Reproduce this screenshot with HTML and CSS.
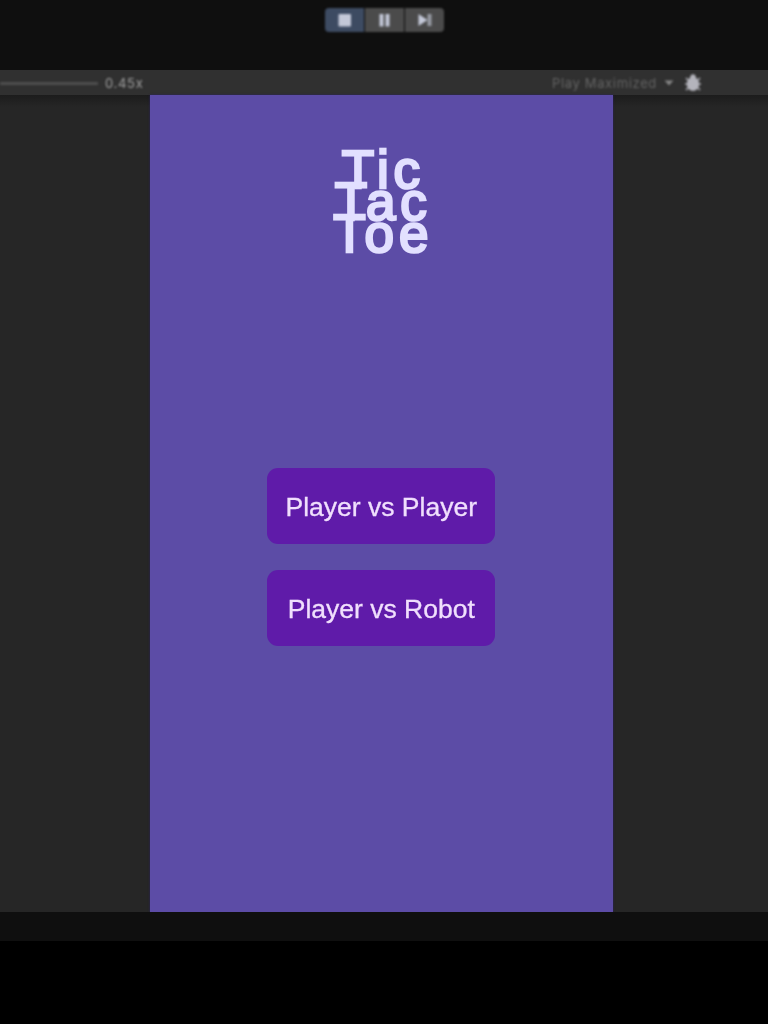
FILE: index.html
```html
<!DOCTYPE html>
<html lang="en">
<head>
<meta charset="utf-8">
<title>Tic Tac Toe</title>
<link rel="stylesheet" href="styles.css">
</head>
<body>
<header class="playbar">
  <div class="controls">
    <button class="control active" aria-label="Stop"><svg width="14" height="14" viewBox="0 0 14 14"><rect x="0.500" y="1" width="12.500" height="12.500" rx="1"/></svg></button>
    <button class="control" aria-label="Pause"><svg width="14" height="14" viewBox="0 0 14 14"><path d="M1.500 1h4v12.500h-4zM7.500 1h4v12.500h-4z"/></svg></button>
    <button class="control" aria-label="Step"><svg width="14" height="14" viewBox="0 0 14 14"><path d="M0.500 1L9.500 7L0.500 13z"/><path class="step-end" d="M9.500 1h4v12h-4z"/></svg></button>
  </div>
</header>
<div class="toolbar">
  <div class="scale"><span class="track"></span><span class="value">0.45x</span></div>
  <div class="options">
    <span class="mode">Play Maximized</span>
    <svg class="caret" width="10" height="6" viewBox="0 0 10 6"><path d="M0.500 0.500h9L5 5.500z"/></svg>
    <svg class="bug" width="18" height="20" viewBox="0 0 18 20"><path class="legs" d="M2 5l3 3M16 5l-3 3M1 11h16M2 17l3-3M16 17l-3-3"/><path d="M6 5c0-5 6-5 6 0z"/><ellipse cx="9" cy="11" rx="6.200" ry="7"/></svg>
  </div>
</div>
<div class="stage">
  <main class="game">
    <h1 class="title">Tic<br>Tac<br>Toe</h1>
    <div class="menu">
      <button class="choice">Player vs Player</button>
      <button class="choice">Player vs Robot</button>
    </div>
  </main>
</div>
<footer class="status"></footer>
</body>
</html>
```
FILE: styles.css
```css
* { box-sizing: border-box; }
body {
  margin: 0;
  height: 1024px;
  overflow: hidden;
  background: #000;
  font-family: "Liberation Sans", Arial, sans-serif;
}
button { border: 0; padding: 0; font-family: inherit; }
.playbar {
  height: 70px;
  padding: 8px 0 0 325px;
  background: #0f0f0f;
}
.controls {
  display: flex;
  gap: 1px;
  width: 119px;
  height: 24px;
  border-radius: 4px;
  overflow: hidden;
  filter: blur(0.8px);
}
.control {
  flex: 1;
  display: flex;
  align-items: center;
  justify-content: center;
  background: #4b4b4b;
}
.control.active { background: #3d4b62; }
.control svg { fill: #c3c8d8; }
.control .step-end { fill: #9699a2; }
.toolbar {
  display: flex;
  justify-content: space-between;
  height: 25px;
  background: #303030;
  font-family: Inter, sans-serif;
  font-size: 13px;
}
.scale, .options {
  display: flex;
  align-items: center;
  filter: blur(0.8px);
}
.track {
  width: 98px;
  height: 3px;
  margin-right: 7px;
  margin-top: 2px;
  background: #4e4e4e;
}
.value { color: #a0a0a0; padding-top: 1px; letter-spacing: 0.7px; }
.options { width: 216px; }
.mode {
  width: 105px;
  color: #646464;
  letter-spacing: 0.65px;
  white-space: nowrap;
}
.caret { fill: #858585; margin: 0 10px 0 7px; }
.bug { fill: #b4b4bc; flex: none; }
.legs { fill: none; stroke: #96969c; stroke-width: 1.800px; }
.stage {
  height: 817px;
  padding-left: 150px;
  background: linear-gradient(#1c1c1c, #262626 12px);
}
.game {
  width: 462.500px;
  height: 817px;
  padding-top: 59px;
  background: #5c4ca6;
  box-shadow: 0 0 2px #2a2164;
}
.title {
  margin: 0;
  height: 102px;
  padding-left: 4px;
  color: #e2e0ff;
  font-size: 53px;
  font-weight: 400;
  -webkit-text-stroke: 2.600px #e2e0ff;
  line-height: 32px;
  letter-spacing: 4.800px;
  font-kerning: normal;
  text-align: center;
  filter: blur(0.7px);
}
.menu {
  display: flex;
  flex-direction: column;
  align-items: center;
  gap: 26px;
  padding-top: 212px;
}
.choice {
  width: 228px;
  height: 76px;
  padding-top: 2px;
  border-radius: 11px;
  background: #5f1ba9;
  color: #f0dffd;
  font-size: 26.500px;
  -webkit-text-stroke: 0.300px #f0dffd;
  filter: blur(0.7px);
}
.status { height: 29px; background: #0f0f0f; }
```
